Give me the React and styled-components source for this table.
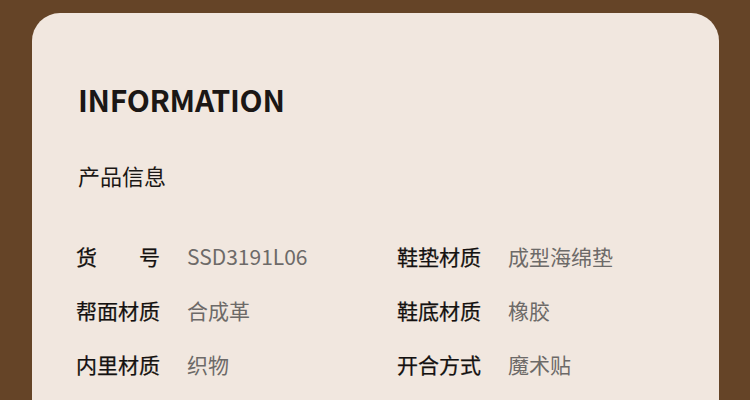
import React from 'react';
import styled, { createGlobalStyle } from 'styled-components';

const GlobalStyle = createGlobalStyle`
  html, body {
    margin: 0;
    padding: 0;
    background: #654427;
    height: 400px;
    overflow: hidden;
  }
`;

const Page = styled.div`
  padding: 13px 31px 0 32px;
  font-family: 'Noto Sans CJK SC', 'Noto Sans', sans-serif;
`;

const Card = styled.section`
  background: #f1e7df;
  border-radius: 28px 28px 0 0;
  min-height: 420px;
  padding: 71px 44px 0 44px;
`;

const Title = styled.h1`
  margin: 0 0 0 2px;
  font-size: 30px;
  line-height: 1;
  font-weight: 700;
  letter-spacing: -0.3px;
  color: #1b1715;
`;

const Subtitle = styled.h2`
  margin: 50px 0 0 2px;
  font-size: 22px;
  line-height: 1;
  font-weight: 400;
  color: #1b1715;
`;

const Grid = styled.div`
  display: grid;
  grid-template-columns: 321px 1fr;
  row-gap: 34px;
  margin-top: 60px;
`;

const Item = styled.div`
  display: flex;
  align-items: center;
  font-size: 21px;
  line-height: 20px;
`;

const Label = styled.span`
  width: 84px;
  margin-right: 27px;
  color: #141110;
  font-weight: 400;
  -webkit-text-stroke: 0.25px #141110;
  display: flex;
  justify-content: ${(p) => (p.$spread ? 'space-between' : 'flex-start')};
`;

const Value = styled.span`
  color: #6d6a68;
  font-weight: 400;
`;

const items = [
  { label: ['货', '号'], value: 'SSD3191L06' },
  { label: ['鞋垫材质'], value: '成型海绵垫' },
  { label: ['帮面材质'], value: '合成革' },
  { label: ['鞋底材质'], value: '橡胶' },
  { label: ['内里材质'], value: '织物' },
  { label: ['开合方式'], value: '魔术贴' },
];

export default function App() {
  return (
    <>
      <GlobalStyle />
      <Page>
        <Card>
          <Title>INFORMATION</Title>
          <Subtitle>产品信息</Subtitle>
          <Grid>
            {items.map((it) => (
              <Item key={it.value}>
                <Label $spread={it.label.length > 1}>
                  {it.label.map((t) => (
                    <span key={t}>{t}</span>
                  ))}
                </Label>
                <Value>{it.value}</Value>
              </Item>
            ))}
          </Grid>
        </Card>
      </Page>
    </>
  );
}
